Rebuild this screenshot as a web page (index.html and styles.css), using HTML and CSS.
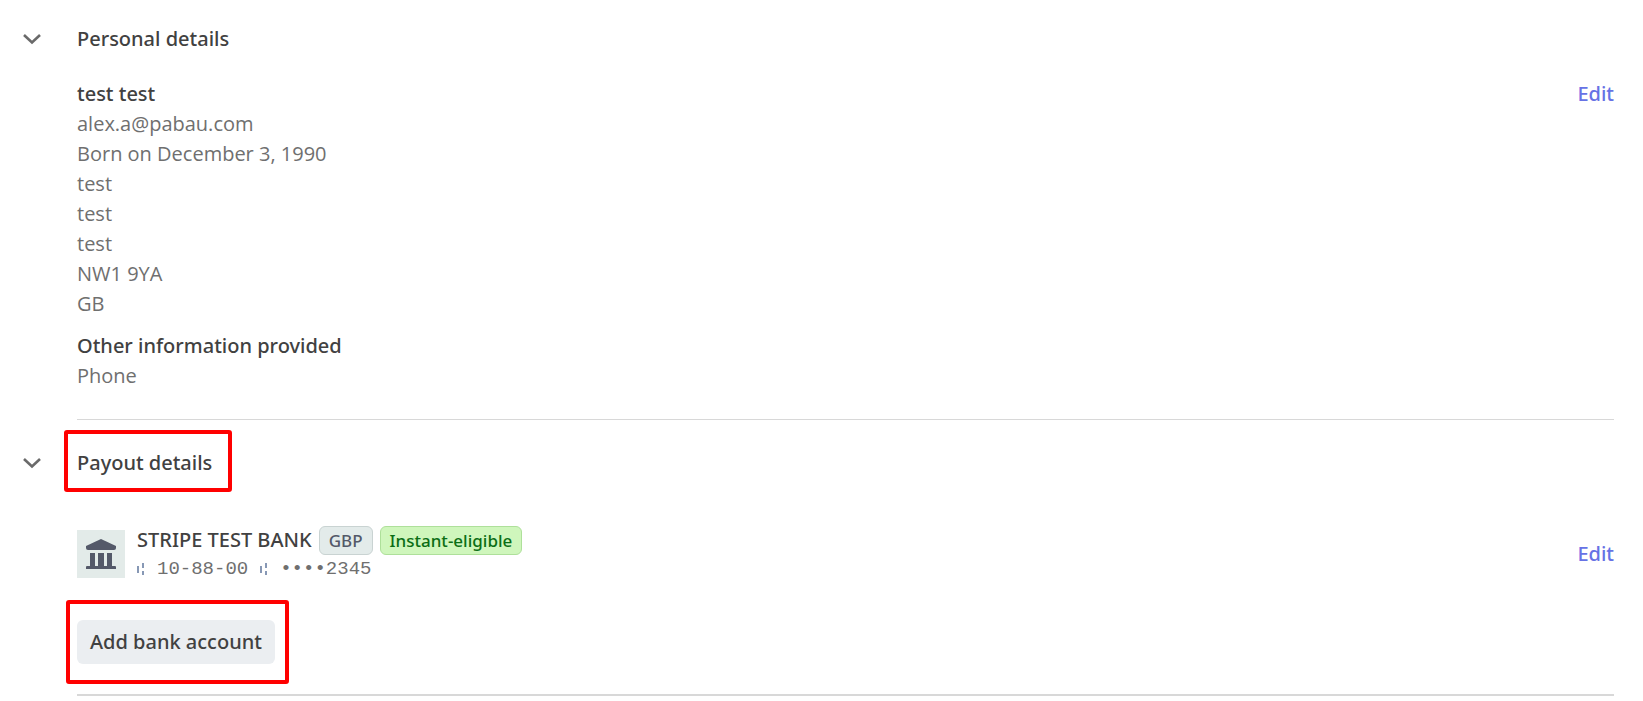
FILE: index.html
```html
<!DOCTYPE html>
<html lang="en">
<head>
<meta charset="UTF-8" />
<meta name="viewport" content="width=device-width, initial-scale=1" />
<title>Account details</title>
<link rel="stylesheet" href="styles.css">
</head>
<body>

<section class="section">
  <button class="toggle" aria-label="Toggle personal details">
    <svg class="chevron" viewBox="0 0 20 12"><path d="M2 2 L10 9.500 L18 2" /></svg>
  </button>
  <div class="content">
    <h2 class="title">Personal details</h2>
    <div class="row">
      <div class="info">
        <p class="strong">test test</p>
        <p>alex.a@pabau.com</p>
        <p>Born on December 3, 1990</p>
        <p>test</p>
        <p>test</p>
        <p>test</p>
        <p>NW1 9YA</p>
        <p>GB</p>
        <p class="strong other">Other information provided</p>
        <p>Phone</p>
      </div>
      <a class="edit" href="#">Edit</a>
    </div>
  </div>
</section>

<section class="section payout">
  <button class="toggle" aria-label="Toggle payout details">
    <svg class="chevron" viewBox="0 0 20 12"><path d="M2 2 L10 9.500 L18 2" /></svg>
  </button>
  <div class="content">
    <h2 class="title"><span class="marked">Payout details</span></h2>
    <div class="row bank-row">
      <div class="bank-icon">
        <svg viewBox="0 0 30 30">
          <path d="M15 0 L30 7 V9 Q30 11 28 11 H2 Q0 11 0 9 V7 Z" />
          <path d="M4 14 H9 V27 H4 Z M12 14 H18 V27 H12 Z M21 14 H26 V27 H21 Z" />
          <path d="M0 30 V28 Q0 27 1 27 H29 Q30 27 30 28 V30 Z" />
        </svg>
      </div>
      <div class="bank">
        <div class="bank-name"><span>STRIPE TEST BANK</span> <span class="badge">GBP</span><span class="badge green">Instant-eligible</span></div>
        <div class="bank-number">
          <svg class="mark" viewBox="0 0 8 12"><path d="M1 3 V10 M6 0 V5 M6 8 V12" /></svg>
          <span>10-88-00</span>
          <svg class="mark" viewBox="0 0 8 12"><path d="M1 3 V10 M6 0 V5 M6 8 V12" /></svg>
          <span>••••2345</span>
        </div>
      </div>
      <a class="edit" href="#">Edit</a>
    </div>
    <div class="marked add"><button class="add-btn">Add bank account</button></div>
  </div>
</section>

</body>
</html>
```

FILE: styles.css
```css
body {
  font-family: "Segoe UI", "Open Sans", "Noto Sans", sans-serif;
  font-size: 20px;
  line-height: 30px;
  background: #fff;
  margin: 0;
  padding: 24px 29px 0 22px;
}
p, h2 {
  margin: 0;
}
button {
  font: inherit;
  border: none;
  cursor: pointer;
}
.section {
  display: flex;
  align-items: flex-start;
  gap: 35px;
}
.toggle {
  display: flex;
  align-items: center;
  height: 30px;
  padding: 0;
  background: none;
}
.chevron {
  width: 20px;
  height: 12px;
  fill: none;
  stroke: #6a6a6a;
  stroke-width: 2.6;
}
.content {
  flex: 1;
  padding-bottom: 28px;
  border-bottom: 1px solid #d8d8d8;
}
.title, .strong, .edit, .bank-name, .add-btn {
  font-family: "Segoe UI", "Noto Sans", sans-serif;
  font-weight: 500;
}
.title {
  font-size: 20px;
  color: #414141;
}
.row {
  display: flex;
  align-items: flex-start;
  margin-top: 25px;
}
.info {
  flex: 1;
  color: #6f6f6f;
}
.strong {
  color: #414141;
}
.other {
  margin-top: 12px;
}
.edit {
  color: #6772e5;
  text-decoration: none;
}
.payout {
  margin-top: 28px;
}
.payout .content {
  padding-bottom: 10px;
  border-bottom-width: 2px;
}
/* red frame, pulled out so the text stays on the column edge */
.marked {
  display: inline-block;
  margin: -18px 0 -14px -13px;
  padding: 14px 16px 10px 9px;
  border: 4px solid #f00;
  border-radius: 3px;
}
.bank-row {
  align-items: center;
  gap: 12px;
  margin-top: 47px;
}
.bank-icon {
  display: flex;
  align-items: center;
  justify-content: center;
  width: 48px;
  height: 48px;
  background: #e3ebe9;
}
.bank-icon svg {
  width: 30px;
  height: 30px;
  fill: #545969;
}
.bank {
  flex: 1;
}
.bank-name {
  display: flex;
  align-items: center;
  gap: 7px;
  color: #414141;
}
.badge {
  padding: 0 9px;
  border: 1px solid #c9d3d2;
  border-radius: 6px;
  background: #e3ebea;
  color: #545969;
  font-size: 17px;
  line-height: 27px;
}
.green {
  border-color: #aee09a;
  background: #cff6bc;
  color: #0b6e15;
}
.bank-number {
  display: flex;
  align-items: center;
  gap: 12px;
  color: #6f6f6f;
  font-family: "Liberation Mono", monospace;
  font-size: 19px;
  line-height: 28px;
}
.mark {
  width: 8px;
  height: 12px;
  fill: none;
  stroke: #8798b5;
  stroke-width: 2;
}
.add {
  margin: 17px 0 0 -11px;
  padding: 16px 10px 16px 7px;
}
.add-btn {
  display: block;
  height: 44px;
  padding: 0 13px;
  border-radius: 6px;
  background: #ebeef1;
  color: #414141;
}
```
